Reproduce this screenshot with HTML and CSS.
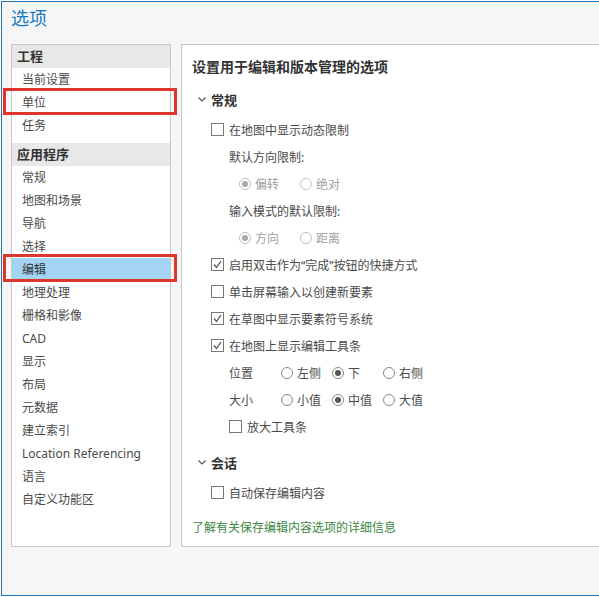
FILE: index.html
```html
<!DOCTYPE html>
<html lang="zh-CN">
  <head>
    <meta charset="UTF-8" />
    <meta name="viewport" content="width=device-width, initial-scale=1.0" />
    <title>选项</title>
    <link rel="stylesheet" href="styles.css">
  </head>
  <body>
    <div class="dialog">
      <h1 class="dialog-title">选项</h1>

      <div class="dialog-body">
        <div class="nav-panel">
          <div class="nav-group">工程</div>
          <div class="nav-item">当前设置</div>
          <div class="nav-item marked">单位</div>
          <div class="nav-item">任务</div>

          <div class="nav-group second">应用程序</div>
          <div class="nav-item">常规</div>
          <div class="nav-item">地图和场景</div>
          <div class="nav-item">导航</div>
          <div class="nav-item">选择</div>
          <div class="nav-item selected marked">编辑</div>
          <div class="nav-item">地理处理</div>
          <div class="nav-item">栅格和影像</div>
          <div class="nav-item">CAD</div>
          <div class="nav-item">显示</div>
          <div class="nav-item">布局</div>
          <div class="nav-item">元数据</div>
          <div class="nav-item">建立索引</div>
          <div class="nav-item">Location Referencing</div>
          <div class="nav-item">语言</div>
          <div class="nav-item">自定义功能区</div>
        </div>

        <div class="settings-panel">
          <h2 class="settings-title">设置用于编辑和版本管理的选项</h2>

          <div class="section-head">
            <svg class="chevron" width="8" height="5" viewBox="0 0 8 5"><polyline points="0.5,0.5 4,4 7.5,0.5" /></svg>
            常规
          </div>

          <div class="row first">
            <span class="box"></span>在地图中显示动态限制
          </div>
          <div class="row sub">默认方向限制:</div>
          <div class="row radios">
            <span class="radio disabled on"><span class="dot"></span>偏转</span>
            <span class="radio disabled"><span class="dot"></span>绝对</span>
          </div>
          <div class="row sub">输入模式的默认限制:</div>
          <div class="row radios">
            <span class="radio disabled on"><span class="dot"></span>方向</span>
            <span class="radio disabled"><span class="dot"></span>距离</span>
          </div>
          <div class="row">
            <span class="box checked"><svg width="13" height="13" viewBox="0 0 13 13"><polyline points="3,6.5 5.5,9.5 10,3" /></svg></span>启用双击作为“完成”按钮的快捷方式
          </div>
          <div class="row">
            <span class="box"></span>单击屏幕输入以创建新要素
          </div>
          <div class="row">
            <span class="box checked"><svg width="13" height="13" viewBox="0 0 13 13"><polyline points="3,6.5 5.5,9.5 10,3" /></svg></span>在草图中显示要素符号系统
          </div>
          <div class="row">
            <span class="box checked"><svg width="13" height="13" viewBox="0 0 13 13"><polyline points="3,6.5 5.5,9.5 10,3" /></svg></span>在地图上显示编辑工具条
          </div>
          <div class="row sub options">
            <span class="option-label">位置</span>
            <span class="radio"><span class="dot"></span>左侧</span>
            <span class="radio on"><span class="dot"></span>下</span>
            <span class="radio"><span class="dot"></span>右侧</span>
          </div>
          <div class="row sub options">
            <span class="option-label">大小</span>
            <span class="radio"><span class="dot"></span>小值</span>
            <span class="radio on"><span class="dot"></span>中值</span>
            <span class="radio"><span class="dot"></span>大值</span>
          </div>
          <div class="row sub">
            <span class="box"></span>放大工具条
          </div>

          <div class="section-head session">
            <svg class="chevron" width="8" height="5" viewBox="0 0 8 5"><polyline points="0.5,0.5 4,4 7.5,0.5" /></svg>
            会话
          </div>
          <div class="row first">
            <span class="box"></span>自动保存编辑内容
          </div>

          <a class="help-link" href="#">了解有关保存编辑内容选项的详细信息</a>
        </div>
      </div>
    </div>
  </body>
</html>
```

FILE: styles.css
```css
body {
  margin: 0;
  background: #fff;
  overflow: hidden;
  font-family: "Noto Sans", "Noto Sans CJK SC", sans-serif;
  font-size: 12px;
  color: #4a4a4a;
}
.dialog {
  box-sizing: border-box;
  height: 595px;
  margin: 1px 0 0 1px;
  padding: 4px 0 0 9px;
  background: #f5f7f6;
  border: 1px solid #1f74b6;
  border-right: none;
}
.dialog-title {
  margin: 0 0 14px;
  font-size: 18px;
  line-height: 24px;
  font-weight: normal;
  color: #1b78c2;
}
.dialog-body {
  display: flex;
  gap: 10px;
}
.nav-panel {
  box-sizing: border-box;
  flex: none;
  width: 160px;
  height: 503px;
  background: #fff;
  border: 1px solid #c8c8c8;
}
.nav-group {
  height: 23px;
  line-height: 23px;
  padding-left: 5px;
  background: #e8e8e8;
  font-size: 13px;
  font-weight: bold;
  color: #333;
}
.nav-group.second {
  margin-top: 6px;
}
.nav-item {
  position: relative;
  height: 23px;
  line-height: 23px;
  padding-left: 10px;
  white-space: nowrap;
}
.nav-item.selected {
  background: #a4d4f3;
  color: #333;
}
.nav-item.marked::after {
  content: "";
  position: absolute;
  left: -9px;
  right: -7px;
  top: -3px;
  bottom: -1px;
  border: 3px solid #e0352c;
}
.nav-item.selected.marked::after {
  top: -4px;
}
.settings-panel {
  box-sizing: border-box;
  flex: 1;
  min-width: 0;
  height: 503px;
  padding: 8px 0 0 10px;
  background: #fff;
  border: 1px solid #c8c8c8;
  border-right: none;
}
.settings-title {
  margin: 0;
  height: 28px;
  line-height: 28px;
  font-size: 14px;
  font-weight: bold;
  color: #333;
}
.section-head {
  display: flex;
  align-items: center;
  margin-top: 5px;
  height: 27px;
  padding-left: 6px;
  font-size: 13px;
  font-weight: bold;
  color: #333;
}
.section-head.session {
  margin-top: 9px;
}
.chevron {
  margin-right: 5px;
  fill: none;
  stroke: #555;
  stroke-width: 1.2;
}
.row {
  display: flex;
  align-items: center;
  height: 27px;
  padding-left: 19px;
  white-space: nowrap;
}
.row.first {
  margin-top: 3px;
}
.row.sub {
  padding-left: 37px;
}
.row.radios {
  padding-left: 47px;
}
.box {
  box-sizing: border-box;
  display: inline-flex;
  width: 13px;
  height: 13px;
  margin-right: 5px;
  border: 1px solid #777;
  background: #fff;
}
.box svg {
  margin: -1px;
  fill: none;
  stroke: #555;
  stroke-width: 1.3;
}
.radios .radio {
  width: 61px;
}
.option-label {
  width: 52px;
}
.options .radio {
  width: 51px;
}
.radio {
  display: inline-flex;
  align-items: center;
}
.dot {
  box-sizing: border-box;
  display: inline-flex;
  align-items: center;
  justify-content: center;
  width: 12px;
  height: 12px;
  margin-right: 4px;
  border: 1px solid #888;
  border-radius: 50%;
  background: #fff;
}
.radio.on .dot::after {
  content: "";
  width: 6px;
  height: 6px;
  border-radius: 50%;
  background: #555;
}
.radio.disabled {
  color: #a0a0a0;
}
.radio.disabled .dot {
  border-color: #c0c0c0;
}
.radio.disabled.on .dot::after {
  background: #a8a8a8;
}
.help-link {
  display: block;
  margin-top: 8px;
  height: 27px;
  line-height: 27px;
  color: #3b873f;
  text-decoration: none;
}
```
